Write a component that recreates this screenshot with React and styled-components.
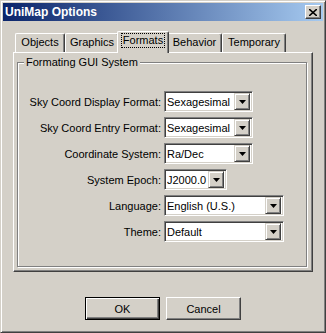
import React from "react";
import styled, { createGlobalStyle } from "styled-components";

const GlobalStyle = createGlobalStyle`
  html, body {
    margin: 0;
    padding: 0;
    background: #d4d0c8;
  }
  body {
    font-family: "Liberation Sans", Arial, sans-serif;
    font-size: 11px;
    color: #000;
  }
`;

const Window = styled.div`
  box-sizing: border-box;
  width: 326px;
  height: 333px;
  background: #d4d0c8;
  border-top: 1px solid #d4d0c8;
  border-left: 1px solid #d4d0c8;
  border-right: 1px solid #404040;
  border-bottom: 1px solid #404040;
  box-shadow: inset 1px 1px 0 #ffffff, inset -1px -1px 0 #808080;
  padding: 2px;
  display: flex;
  flex-direction: column;
`;

const TitleBar = styled.div`
  height: 18px;
  background: linear-gradient(to right, #0a246a, #a6caf0);
  display: flex;
  align-items: center;
  justify-content: space-between;
  padding: 0 2px 0 2px;
`;

const Title = styled.span`
  color: #fff;
  font-weight: bold;
  font-size: 12px;
`;

const CloseButton = styled.div`
  box-sizing: border-box;
  width: 16px;
  height: 14px;
  background: #d4d0c8;
  border-top: 1px solid #fff;
  border-left: 1px solid #fff;
  border-right: 1px solid #404040;
  border-bottom: 1px solid #404040;
  box-shadow: inset -1px -1px 0 #808080;
  display: flex;
  align-items: center;
  justify-content: center;
`;

const Body = styled.div`
  padding: 10px 0 0 10px;
  display: flex;
  flex-direction: column;
`;

const TabRow = styled.div`
  display: flex;
  align-items: flex-end;
  padding-left: 2px;
  height: 21px;
`;

const Tab = styled.div`
  box-sizing: border-box;
  position: relative;
  z-index: ${(p) => (p.$active ? 2 : 0)};
  width: ${(p) => p.$w + (p.$active ? 4 : 0)}px;
  height: ${(p) => (p.$active ? 22 : 19)}px;
  margin: 0 ${(p) => (p.$active ? -2 : 0)}px ${(p) => (p.$active ? -1 : 0)}px;
  background: #d4d0c8;
  border-top: 1px solid #fff;
  border-left: 1px solid #fff;
  border-right: 1px solid #404040;
  border-radius: 2px 2px 0 0;
  box-shadow: inset -1px 0 0 #808080;
  display: flex;
  align-items: flex-start;
  justify-content: center;
  padding-top: 2px;
`;

const TabText = styled.span`
  padding: 0 1px;
  line-height: 13px;
  outline: ${(p) => (p.$focus ? "1px dotted #000" : "none")};
`;

const Panel = styled.div`
  box-sizing: border-box;
  width: 300px;
  height: 220px;
  border-top: 1px solid #fff;
  border-left: 1px solid #fff;
  border-right: 1px solid #404040;
  border-bottom: 1px solid #404040;
  box-shadow: inset -1px -1px 0 #808080;
  padding: 9px 5px 0 3px;
`;

const GroupBox = styled.div`
  position: relative;
  box-sizing: border-box;
  width: 290px;
  height: 205px;
  border: 1px solid #808080;
  box-shadow: inset 1px 1px 0 #fff, 1px 1px 0 #fff;
  padding: 28px 0 0 0;
  display: grid;
  grid-template-columns: 143px 1fr;
  column-gap: 3px;
  row-gap: 5px;
  align-content: start;
  align-items: center;
`;

const Caption = styled.span`
  position: absolute;
  top: -7px;
  left: 6px;
  padding: 0 2px;
  background: #d4d0c8;
  line-height: 13px;
`;

const Label = styled.label`
  text-align: right;
  white-space: nowrap;
`;

const Combo = styled.div`
  box-sizing: border-box;
  width: ${(p) => p.$w}px;
  height: 21px;
  background: #fff;
  border-top: 1px solid #808080;
  border-left: 1px solid #808080;
  border-right: 1px solid #fff;
  border-bottom: 1px solid #fff;
  box-shadow: inset 1px 1px 0 #404040, inset -1px -1px 0 #d4d0c8;
  padding: 2px;
  display: flex;
  align-items: center;
`;

const ComboText = styled.span`
  flex: 1;
  padding-left: 0;
  white-space: nowrap;
  overflow: hidden;
`;

const ArrowButton = styled.div`
  box-sizing: border-box;
  flex: none;
  width: 16px;
  height: 17px;
  background: #d4d0c8;
  border-top: 1px solid #d4d0c8;
  border-left: 1px solid #d4d0c8;
  border-right: 1px solid #404040;
  border-bottom: 1px solid #404040;
  box-shadow: inset 1px 1px 0 #fff, inset -1px -1px 0 #808080;
  display: flex;
  align-items: center;
  justify-content: center;
`;

const ButtonRow = styled.div`
  display: flex;
  justify-content: center;
  gap: 6px;
  margin-top: 25px;
  padding-right: 10px;
`;

const Button = styled.div`
  box-sizing: border-box;
  width: 75px;
  height: 23px;
  background: #d4d0c8;
  border-top: 1px solid ${(p) => (p.$default ? "#000" : "#fff")};
  border-left: 1px solid ${(p) => (p.$default ? "#000" : "#fff")};
  border-right: 1px solid ${(p) => (p.$default ? "#000" : "#404040")};
  border-bottom: 1px solid ${(p) => (p.$default ? "#000" : "#404040")};
  box-shadow: ${(p) =>
    p.$default
      ? "inset 1px 1px 0 #fff, inset -1px -1px 0 #404040, inset -2px -2px 0 #808080"
      : "inset -1px -1px 0 #808080"};
  display: flex;
  align-items: center;
  justify-content: center;
`;

const DownArrow = () => (
  <svg width="7" height="4" viewBox="0 0 7 4">
    <path d="M0 0h7L3.5 4z" fill="#000" />
  </svg>
);

const CloseIcon = () => (
  <svg width="8" height="7" viewBox="0 0 8 7">
    <path d="M0 0l8 7M8 0L0 7" stroke="#000" strokeWidth="1.6" />
  </svg>
);

const tabs = [
  { name: "Objects", w: 50 },
  { name: "Graphics", w: 54 },
  { name: "Formats", w: 48, active: true },
  { name: "Behavior", w: 55 },
  { name: "Temporary", w: 64 },
];

const fields = [
  { label: "Sky Coord Display Format:", value: "Sexagesimal", w: 89 },
  { label: "Sky Coord Entry Format:", value: "Sexagesimal", w: 89 },
  { label: "Coordinate System:", value: "Ra/Dec", w: 89 },
  { label: "System Epoch:", value: "J2000.0", w: 63 },
  { label: "Language:", value: "English (U.S.)", w: 120 },
  { label: "Theme:", value: "Default", w: 120 },
];

const App = () => {
  return (
    <>
      <GlobalStyle />
      <Window>
        <TitleBar>
          <Title>UniMap Options</Title>
          <CloseButton>
            <CloseIcon />
          </CloseButton>
        </TitleBar>
        <Body>
          <TabRow>
            {tabs.map((t) => (
              <Tab key={t.name} $w={t.w} $active={t.active}>
                <TabText $focus={t.active}>{t.name}</TabText>
              </Tab>
            ))}
          </TabRow>
          <Panel>
            <GroupBox>
              <Caption>Formating GUI System</Caption>
              {fields.map((f) => (
                <React.Fragment key={f.label}>
                  <Label>{f.label}</Label>
                  <Combo $w={f.w}>
                    <ComboText>{f.value}</ComboText>
                    <ArrowButton>
                      <DownArrow />
                    </ArrowButton>
                  </Combo>
                </React.Fragment>
              ))}
            </GroupBox>
          </Panel>
          <ButtonRow>
            <Button $default>OK</Button>
            <Button>Cancel</Button>
          </ButtonRow>
        </Body>
      </Window>
    </>
  );
};

export default App;
